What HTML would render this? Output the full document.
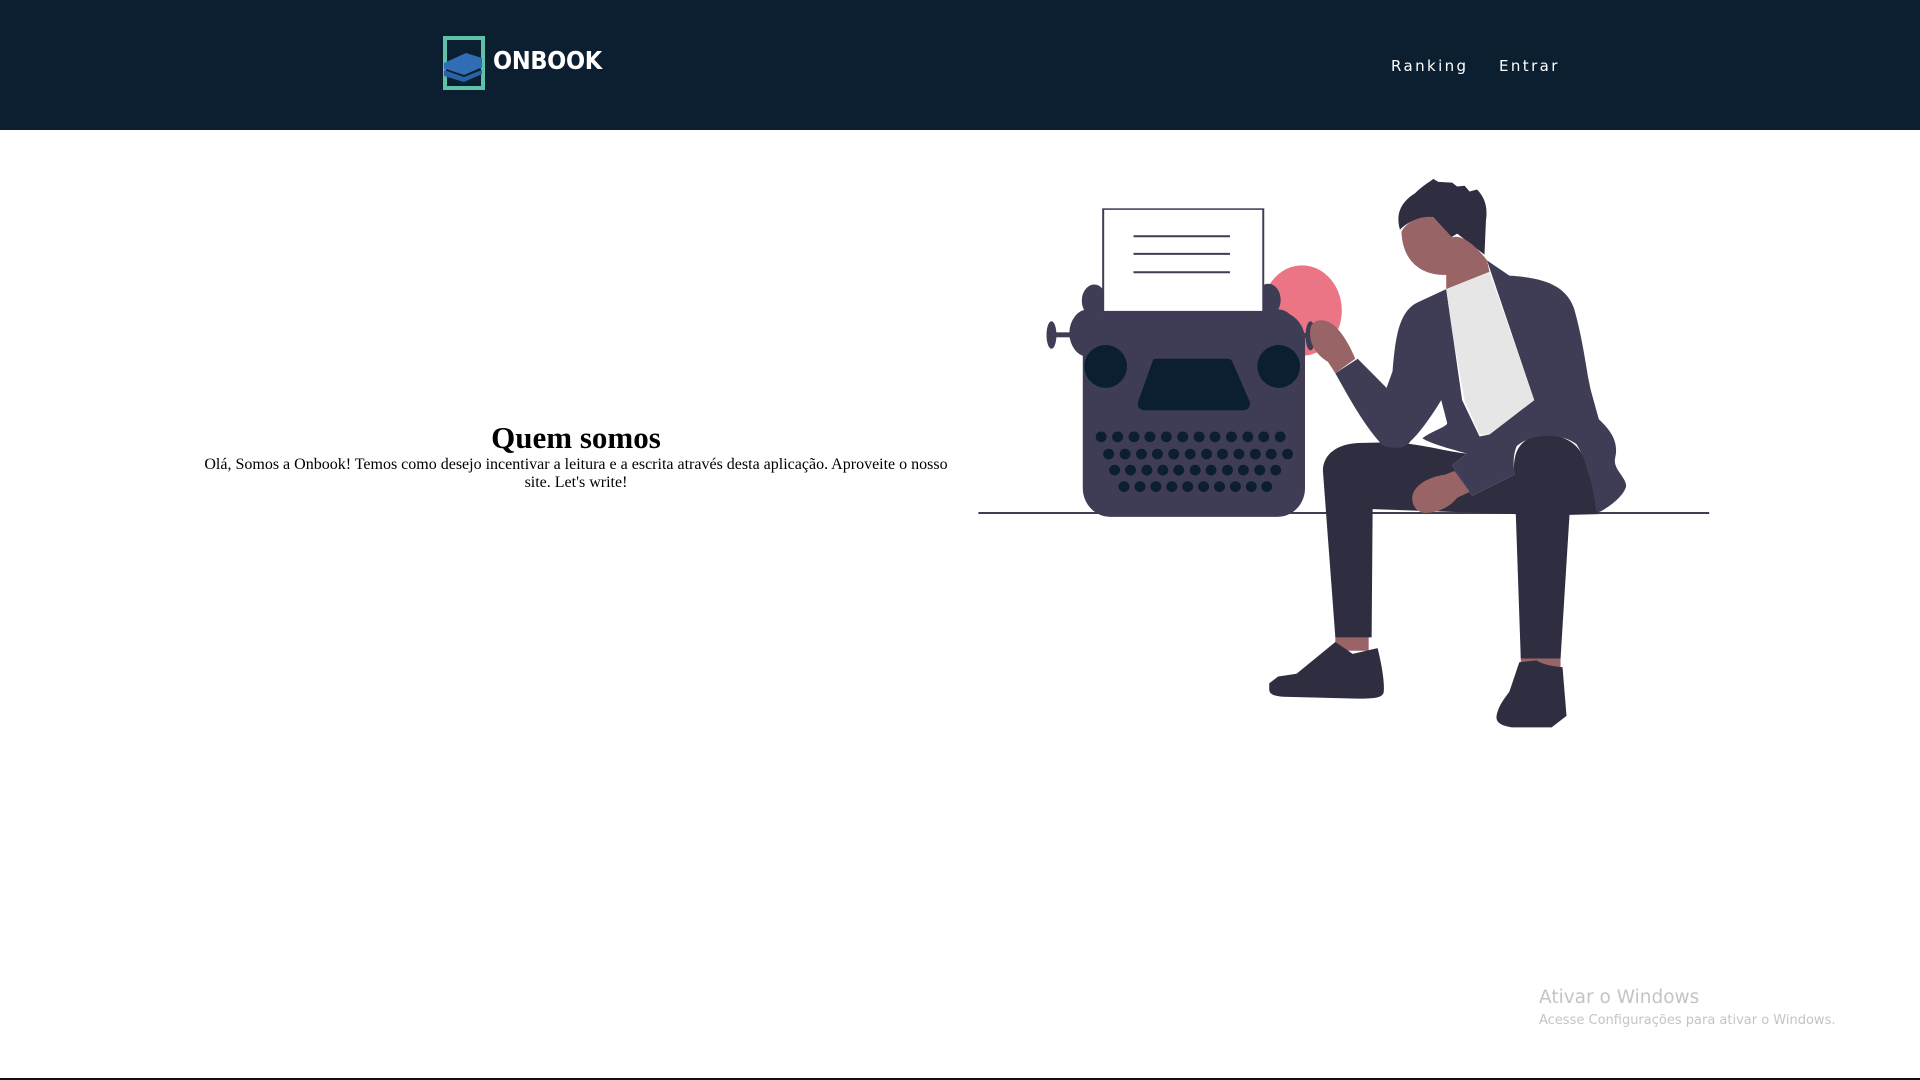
<!DOCTYPE html>
<html><head><meta charset="utf-8"><style>
html,body{margin:0;padding:0;width:1920px;height:1080px;background:#fff;overflow:hidden;position:relative}
.hdr{position:absolute;left:0;top:0;width:1920px;height:130px;background:#0c1f30}
.logo{position:absolute;left:493px;top:46px;color:#fff;font-family:"DejaVu Sans Condensed","DejaVu Sans","Liberation Sans",sans-serif;font-weight:bold;font-size:25px;letter-spacing:-0.3px}
.nav{position:absolute;top:57px;color:#fff;font-family:"DejaVu Sans","Liberation Sans",sans-serif;font-size:15px;letter-spacing:2.4px}
h1{position:absolute;margin:0;left:176px;width:800px;top:420px;text-align:center;font-family:"Liberation Serif",serif;font-size:31px;font-weight:bold;line-height:36px}
p{position:absolute;margin:0;left:176px;width:800px;top:456px;text-align:center;font-family:"Liberation Serif",serif;font-size:16px;line-height:18px}
.w1{position:absolute;left:1539px;top:987px;color:#c4c4c4;font-family:"DejaVu Sans",sans-serif;font-size:18.5px}
.w2{position:absolute;left:1539px;top:1013px;color:#c4c4c4;font-family:"DejaVu Sans",sans-serif;font-size:13px}
.bl{position:absolute;left:0;top:1078px;width:1920px;height:2px;background:#111}
</style></head><body>
<div class="hdr"></div>
<svg style="position:absolute;left:440px;top:35px" width="50" height="58" viewBox="0 0 50 58">
<rect x="5" y="3" width="38" height="50" fill="none" stroke="#5fc2a8" stroke-width="4"/>
<polygon points="4,28 26,18 42,23 42,33 24,41 4,34" fill="#2f6db5"/>
<polygon points="6,34 24,40 40,33 40,38 24,45 6,40" fill="#0c1f30"/>
<polygon points="4,35 24,42 42,35 42,39 24,47 4,41" fill="#2a62a8"/>
</svg>
<div class="logo">ONBOOK</div>
<div class="nav" style="left:1391px">Ranking</div>
<div class="nav" style="left:1499px">Entrar</div>
<h1>Quem somos</h1>
<p>Olá, Somos a Onbook! Temos como desejo incentivar a leitura e a escrita através desta aplicação. Aproveite o nosso<br>site. Let's write!</p>
<svg style="position:absolute;left:0;top:0" width="1920" height="1080" viewBox="0 0 1568 882">
<g transform="matrix(0.406,0,0,0.3126,784,129.8)">
<line x1="37" y1="925" x2="1507" y2="925" stroke="#3f3d56" stroke-width="5"/>
<ellipse cx="688" cy="396" rx="80" ry="118" fill="#ec7585"/>
<ellipse cx="270" cy="370" rx="25" ry="42" fill="#3f3d56"/>
<ellipse cx="620" cy="368" rx="25" ry="42" fill="#3f3d56"/>
<ellipse cx="258" cy="455" rx="38" ry="62" fill="#3f3d56"/>
<ellipse cx="640" cy="455" rx="38" ry="62" fill="#3f3d56"/>
<rect x="247" y="398" width="447" height="537" rx="55" ry="75" fill="#3f3d56"/>
<rect x="185" y="453" width="40" height="13" fill="#3f3d56"/>
<ellipse cx="184" cy="460" rx="10" ry="36" fill="#3f3d56"/>
<rect x="676" y="455" width="30" height="13" fill="#3f3d56"/>
<ellipse cx="705" cy="462" rx="10" ry="38" fill="#3f3d56"/>
<ellipse cx="293" cy="542" rx="43" ry="56" fill="#0c1f30"/>
<ellipse cx="641" cy="542" rx="43" ry="56" fill="#0c1f30"/>
<path d="M392,522 L538,522 Q545,522 548,530 L583,635 Q585,657 565,657 L375,657 Q355,657 358,635 L387,530 Q389,522 392,522 Z" fill="#0c1f30"/>
<g fill="#0c1f30">
<ellipse cx="284" cy="726" rx="11" ry="14"/><ellipse cx="317" cy="726" rx="11" ry="14"/><ellipse cx="350" cy="726" rx="11" ry="14"/><ellipse cx="382" cy="726" rx="11" ry="14"/><ellipse cx="415" cy="726" rx="11" ry="14"/><ellipse cx="448" cy="726" rx="11" ry="14"/><ellipse cx="481" cy="726" rx="11" ry="14"/><ellipse cx="513" cy="726" rx="11" ry="14"/><ellipse cx="546" cy="726" rx="11" ry="14"/><ellipse cx="579" cy="726" rx="11" ry="14"/><ellipse cx="611" cy="726" rx="11" ry="14"/><ellipse cx="644" cy="726" rx="11" ry="14"/>
<ellipse cx="299" cy="771" rx="11" ry="14"/><ellipse cx="332" cy="771" rx="11" ry="14"/><ellipse cx="365" cy="771" rx="11" ry="14"/><ellipse cx="397" cy="771" rx="11" ry="14"/><ellipse cx="430" cy="771" rx="11" ry="14"/><ellipse cx="463" cy="771" rx="11" ry="14"/><ellipse cx="496" cy="771" rx="11" ry="14"/><ellipse cx="528" cy="771" rx="11" ry="14"/><ellipse cx="561" cy="771" rx="11" ry="14"/><ellipse cx="594" cy="771" rx="11" ry="14"/><ellipse cx="626" cy="771" rx="11" ry="14"/><ellipse cx="659" cy="771" rx="11" ry="14"/>
<ellipse cx="311" cy="813" rx="11" ry="14"/><ellipse cx="343" cy="813" rx="11" ry="14"/><ellipse cx="376" cy="813" rx="11" ry="14"/><ellipse cx="408" cy="813" rx="11" ry="14"/><ellipse cx="440" cy="813" rx="11" ry="14"/><ellipse cx="473" cy="813" rx="11" ry="14"/><ellipse cx="505" cy="813" rx="11" ry="14"/><ellipse cx="538" cy="813" rx="11" ry="14"/><ellipse cx="570" cy="813" rx="11" ry="14"/><ellipse cx="603" cy="813" rx="11" ry="14"/><ellipse cx="635" cy="813" rx="11" ry="14"/>
<ellipse cx="330" cy="856" rx="11" ry="14"/><ellipse cx="362" cy="856" rx="11" ry="14"/><ellipse cx="394" cy="856" rx="11" ry="14"/><ellipse cx="426" cy="856" rx="11" ry="14"/><ellipse cx="458" cy="856" rx="11" ry="14"/><ellipse cx="490" cy="856" rx="11" ry="14"/><ellipse cx="522" cy="856" rx="11" ry="14"/><ellipse cx="554" cy="856" rx="11" ry="14"/><ellipse cx="586" cy="856" rx="11" ry="14"/><ellipse cx="617" cy="856" rx="11" ry="14"/>
</g>
<rect x="288" y="131" width="322" height="268" fill="#fff" stroke="#3f3d56" stroke-width="4"/>
<g stroke="#3f3d56" stroke-width="5"><line x1="349" y1="202" x2="543" y2="202"/><line x1="349" y1="248" x2="543" y2="248"/><line x1="349" y1="296" x2="543" y2="296"/></g>
<path d="M885,185 C875,140 890,110 915,90 C930,70 945,60 952,52 L962,60 L990,62 L1000,72 L1015,70 L1025,85 L1040,80 C1055,100 1062,125 1058,160 L1055,250 L1000,195 L988,205 L952,152 C920,150 895,170 885,185 Z" fill="#2f2e41"/>
<path d="M888,190 C900,160 930,148 952,152 L990,205 C1010,195 1040,230 1060,265 L1065,295 L978,340 L978,303 C930,305 890,270 888,190 Z" fill="#996466"/>
<path d="M755,1245 L822,1245 L822,1285 L755,1285 Z M1128,1295 L1208,1295 L1208,1330 L1128,1330 Z" fill="#996466"/>
<path d="M730,815 C730,770 760,745 800,742 L870,740 C930,745 980,765 1020,770 L990,800 L1030,880 L1115,825 C1110,760 1130,725 1175,720 C1215,720 1250,745 1260,800 C1275,860 1282,900 1285,928 L1226,930 L1208,1305 L1128,1305 L1118,928 L830,915 L828,1250 L755,1250 Z" fill="#2f2e41"/>
<path d="M920,375 L978,340 L1010,630 L1045,725 L1065,720 L1155,630 L1060,265 L1105,305 C1180,310 1220,335 1235,390 C1255,480 1260,560 1270,610 L1285,680 C1310,710 1325,740 1318,780 C1312,810 1340,830 1340,855 C1335,880 1310,905 1290,920 L1280,925 C1275,860 1262,790 1240,745 C1210,715 1150,715 1120,750 C1110,780 1115,810 1115,825 L1030,880 L990,800 L1020,770 C980,755 950,745 930,730 C950,710 980,700 980,690 L968,630 C940,690 905,750 885,755 L870,555 C875,480 880,400 920,375 Z" fill="#3f3d56"/>
<path d="M978,340 L1065,295 L1155,630 L1065,720 L1045,720 L1015,630 L990,450 Z" fill="#e6e6e6"/>
<path d="M755,560 L800,522 L858,598 L870,555 L905,740 C895,755 870,760 850,748 C815,700 785,630 755,560 Z" fill="#3f3d56"/>
<path d="M740,530 C715,510 700,480 705,440 C715,410 745,420 760,445 C775,465 790,505 795,522 L755,560 Z" fill="#996466"/>
<path d="M910,880 C915,850 945,830 975,825 L995,815 L1025,870 L1000,885 C985,910 960,925 935,925 C915,922 908,900 910,880 Z" fill="#996466"/>
<path d="M622,1370 L640,1352 L677,1345 L755,1262 L790,1293 L840,1278 C848,1320 855,1370 852,1395 C848,1408 835,1410 800,1410 L650,1405 C630,1403 622,1398 622,1385 Z" fill="#2f2e41"/>
<path d="M1105,1392 L1125,1315 L1160,1310 C1170,1320 1190,1325 1212,1328 L1220,1455 L1190,1485 L1110,1485 C1085,1480 1076,1470 1080,1450 C1085,1425 1095,1410 1105,1392 Z" fill="#2f2e41"/>
</g>
</svg>
<div class="w1">Ativar o Windows</div>
<div class="w2">Acesse Configurações para ativar o Windows.</div>
<div class="bl"></div>
</body></html>
